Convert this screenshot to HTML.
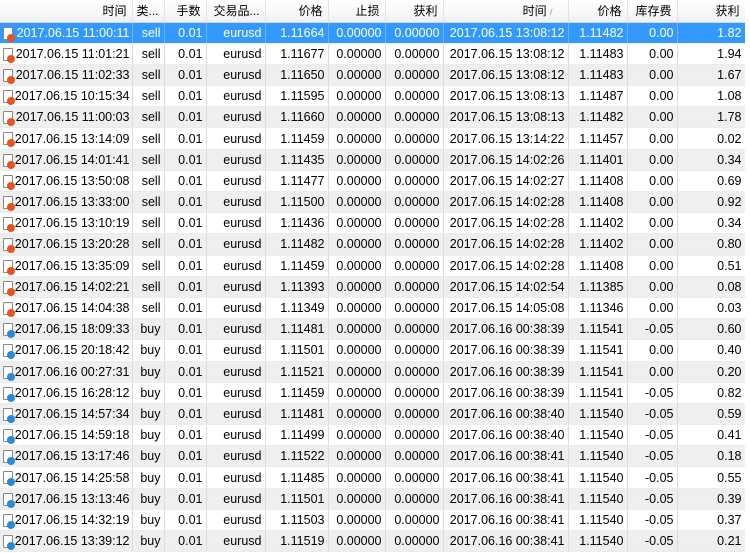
<!DOCTYPE html>
<html><head><meta charset="utf-8"><style>
body{margin:0;width:750px;height:553px;overflow:hidden;background:#fff;font-family:"Liberation Sans","Noto Sans CJK SC",sans-serif;font-size:12.5px;color:#000}
table{border-collapse:collapse;table-layout:fixed;width:745px;position:absolute;left:0;top:0}
td,th{padding:0 3px 0 0;text-align:right;white-space:nowrap;overflow:hidden;border-right:1px solid #dcdcdc;border-bottom:1px solid #ececec;height:21.2px;box-sizing:border-box}
th{font-weight:normal;height:22px;background:linear-gradient(#fff,#f1f2f4);border-bottom:1px solid #d5d5d5;border-right:1px solid #e3e3e3;font-size:12px;padding-right:5px}
tr.g td{background:#efefef}
tr.s td{background:#3399ff;color:#fff;border-right-color:#6fb3ff}
td.c{padding-left:2px;padding-right:2px;position:relative}
td.c i{position:absolute;left:3px;top:4px;width:10px;height:13px;border:1px solid #888;border-radius:1px;background:#fff;box-sizing:border-box}
td.c i:after{content:"";position:absolute;left:3px;top:6px;width:8px;height:8px;border-radius:50%}
.r i:after{background:#e8541c}.b i:after{background:#2a8ad8}
.sc{position:absolute;left:745px;top:0;width:5px;height:553px;background:#fff}
</style></head><body>
<table>
<colgroup><col style="width:132px"><col style="width:32px"><col style="width:42px"><col style="width:59px"><col style="width:63px"><col style="width:57px"><col style="width:58px"><col style="width:125px"><col style="width:59px"><col style="width:50px"><col style="width:68px"></colgroup>
<tr><th>时间</th><th>类...</th><th>手数</th><th>交易品...</th><th>价格</th><th>止损</th><th>获利</th><th>时间 <span style="color:#999;font-size:9px">/</span>&nbsp;&nbsp;&nbsp;</th><th>价格</th><th>库存费</th><th>获利</th></tr>
<tr class="s r"><td class="c"><i></i>2017.06.15 11:00:11</td><td>sell</td><td>0.01</td><td>eurusd</td><td>1.11664</td><td>0.00000</td><td>0.00000</td><td>2017.06.15 13:08:12</td><td>1.11482</td><td>0.00</td><td>1.82</td></tr>
<tr class="r"><td class="c"><i></i>2017.06.15 11:01:21</td><td>sell</td><td>0.01</td><td>eurusd</td><td>1.11677</td><td>0.00000</td><td>0.00000</td><td>2017.06.15 13:08:12</td><td>1.11483</td><td>0.00</td><td>1.94</td></tr>
<tr class="g r"><td class="c"><i></i>2017.06.15 11:02:33</td><td>sell</td><td>0.01</td><td>eurusd</td><td>1.11650</td><td>0.00000</td><td>0.00000</td><td>2017.06.15 13:08:12</td><td>1.11483</td><td>0.00</td><td>1.67</td></tr>
<tr class="r"><td class="c"><i></i>2017.06.15 10:15:34</td><td>sell</td><td>0.01</td><td>eurusd</td><td>1.11595</td><td>0.00000</td><td>0.00000</td><td>2017.06.15 13:08:13</td><td>1.11487</td><td>0.00</td><td>1.08</td></tr>
<tr class="g r"><td class="c"><i></i>2017.06.15 11:00:03</td><td>sell</td><td>0.01</td><td>eurusd</td><td>1.11660</td><td>0.00000</td><td>0.00000</td><td>2017.06.15 13:08:13</td><td>1.11482</td><td>0.00</td><td>1.78</td></tr>
<tr class="r"><td class="c"><i></i>2017.06.15 13:14:09</td><td>sell</td><td>0.01</td><td>eurusd</td><td>1.11459</td><td>0.00000</td><td>0.00000</td><td>2017.06.15 13:14:22</td><td>1.11457</td><td>0.00</td><td>0.02</td></tr>
<tr class="g r"><td class="c"><i></i>2017.06.15 14:01:41</td><td>sell</td><td>0.01</td><td>eurusd</td><td>1.11435</td><td>0.00000</td><td>0.00000</td><td>2017.06.15 14:02:26</td><td>1.11401</td><td>0.00</td><td>0.34</td></tr>
<tr class="r"><td class="c"><i></i>2017.06.15 13:50:08</td><td>sell</td><td>0.01</td><td>eurusd</td><td>1.11477</td><td>0.00000</td><td>0.00000</td><td>2017.06.15 14:02:27</td><td>1.11408</td><td>0.00</td><td>0.69</td></tr>
<tr class="g r"><td class="c"><i></i>2017.06.15 13:33:00</td><td>sell</td><td>0.01</td><td>eurusd</td><td>1.11500</td><td>0.00000</td><td>0.00000</td><td>2017.06.15 14:02:28</td><td>1.11408</td><td>0.00</td><td>0.92</td></tr>
<tr class="r"><td class="c"><i></i>2017.06.15 13:10:19</td><td>sell</td><td>0.01</td><td>eurusd</td><td>1.11436</td><td>0.00000</td><td>0.00000</td><td>2017.06.15 14:02:28</td><td>1.11402</td><td>0.00</td><td>0.34</td></tr>
<tr class="g r"><td class="c"><i></i>2017.06.15 13:20:28</td><td>sell</td><td>0.01</td><td>eurusd</td><td>1.11482</td><td>0.00000</td><td>0.00000</td><td>2017.06.15 14:02:28</td><td>1.11402</td><td>0.00</td><td>0.80</td></tr>
<tr class="r"><td class="c"><i></i>2017.06.15 13:35:09</td><td>sell</td><td>0.01</td><td>eurusd</td><td>1.11459</td><td>0.00000</td><td>0.00000</td><td>2017.06.15 14:02:28</td><td>1.11408</td><td>0.00</td><td>0.51</td></tr>
<tr class="g r"><td class="c"><i></i>2017.06.15 14:02:21</td><td>sell</td><td>0.01</td><td>eurusd</td><td>1.11393</td><td>0.00000</td><td>0.00000</td><td>2017.06.15 14:02:54</td><td>1.11385</td><td>0.00</td><td>0.08</td></tr>
<tr class="r"><td class="c"><i></i>2017.06.15 14:04:38</td><td>sell</td><td>0.01</td><td>eurusd</td><td>1.11349</td><td>0.00000</td><td>0.00000</td><td>2017.06.15 14:05:08</td><td>1.11346</td><td>0.00</td><td>0.03</td></tr>
<tr class="g b"><td class="c"><i></i>2017.06.15 18:09:33</td><td>buy</td><td>0.01</td><td>eurusd</td><td>1.11481</td><td>0.00000</td><td>0.00000</td><td>2017.06.16 00:38:39</td><td>1.11541</td><td>-0.05</td><td>0.60</td></tr>
<tr class="b"><td class="c"><i></i>2017.06.15 20:18:42</td><td>buy</td><td>0.01</td><td>eurusd</td><td>1.11501</td><td>0.00000</td><td>0.00000</td><td>2017.06.16 00:38:39</td><td>1.11541</td><td>0.00</td><td>0.40</td></tr>
<tr class="g b"><td class="c"><i></i>2017.06.16 00:27:31</td><td>buy</td><td>0.01</td><td>eurusd</td><td>1.11521</td><td>0.00000</td><td>0.00000</td><td>2017.06.16 00:38:39</td><td>1.11541</td><td>0.00</td><td>0.20</td></tr>
<tr class="b"><td class="c"><i></i>2017.06.15 16:28:12</td><td>buy</td><td>0.01</td><td>eurusd</td><td>1.11459</td><td>0.00000</td><td>0.00000</td><td>2017.06.16 00:38:39</td><td>1.11541</td><td>-0.05</td><td>0.82</td></tr>
<tr class="g b"><td class="c"><i></i>2017.06.15 14:57:34</td><td>buy</td><td>0.01</td><td>eurusd</td><td>1.11481</td><td>0.00000</td><td>0.00000</td><td>2017.06.16 00:38:40</td><td>1.11540</td><td>-0.05</td><td>0.59</td></tr>
<tr class="b"><td class="c"><i></i>2017.06.15 14:59:18</td><td>buy</td><td>0.01</td><td>eurusd</td><td>1.11499</td><td>0.00000</td><td>0.00000</td><td>2017.06.16 00:38:40</td><td>1.11540</td><td>-0.05</td><td>0.41</td></tr>
<tr class="g b"><td class="c"><i></i>2017.06.15 13:17:46</td><td>buy</td><td>0.01</td><td>eurusd</td><td>1.11522</td><td>0.00000</td><td>0.00000</td><td>2017.06.16 00:38:41</td><td>1.11540</td><td>-0.05</td><td>0.18</td></tr>
<tr class="b"><td class="c"><i></i>2017.06.15 14:25:58</td><td>buy</td><td>0.01</td><td>eurusd</td><td>1.11485</td><td>0.00000</td><td>0.00000</td><td>2017.06.16 00:38:41</td><td>1.11540</td><td>-0.05</td><td>0.55</td></tr>
<tr class="g b"><td class="c"><i></i>2017.06.15 13:13:46</td><td>buy</td><td>0.01</td><td>eurusd</td><td>1.11501</td><td>0.00000</td><td>0.00000</td><td>2017.06.16 00:38:41</td><td>1.11540</td><td>-0.05</td><td>0.39</td></tr>
<tr class="b"><td class="c"><i></i>2017.06.15 14:32:19</td><td>buy</td><td>0.01</td><td>eurusd</td><td>1.11503</td><td>0.00000</td><td>0.00000</td><td>2017.06.16 00:38:41</td><td>1.11540</td><td>-0.05</td><td>0.37</td></tr>
<tr class="g b"><td class="c"><i></i>2017.06.15 13:39:12</td><td>buy</td><td>0.01</td><td>eurusd</td><td>1.11519</td><td>0.00000</td><td>0.00000</td><td>2017.06.16 00:38:41</td><td>1.11540</td><td>-0.05</td><td>0.21</td></tr>
</table>
<div class="sc"></div>
</body></html>
